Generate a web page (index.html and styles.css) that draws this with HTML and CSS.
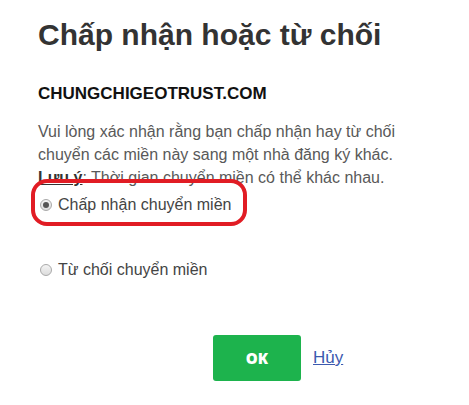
FILE: index.html
```html
<!DOCTYPE html>
<html>
	<head>
		<meta charset="UTF-8">
		<title>Chấp nhận hoặc từ chối</title>
		<link rel="stylesheet" href="styles.css">
	</head>
	<body>
		<div id="dialog">
			<h1 class="title">Chấp nhận hoặc từ chối</h1>
			<div class="domain">CHUNGCHIGEOTRUST.COM</div>
			<p class="desc">
				Vui lòng xác nhận rằng bạn chấp nhận hay từ chối<br>
				chuyển các miền này sang một nhà đăng ký khác.<br>
				<b class="note">Lưu ý</b>: Thời gian chuyển miền có thể khác nhau.
			</p>

			<!--các lựa chọn-->
			<label class="option option-accept">
				<input type="radio" name="choice" checked>
				<span>Chấp nhận chuyển miền</span>
				<i class="mark"></i>
			</label>
			<label class="option option-reject">
				<input type="radio" name="choice">
				<span>Từ chối chuyển miền</span>
			</label>

			<!--nút-->
			<div class="actions">
				<button class="btn-ok">OK</button>
				<a href="#" class="cancel">Hủy</a>
			</div>
		</div>
	</body>
</html>
```
FILE: styles.css
```css
*{
	padding: 0;
	margin: 0;
	box-sizing: border-box;
}
body{
	background-color: #fff;
	font-family: "Liberation Sans", Arial, sans-serif;
	color: #333;
}
#dialog{
	padding: 17px 0 0 38px;
	width: 469px;
}
.title{
	font-size: 30px;
	line-height: 36px;
	font-weight: bold;
	color: #333;
}
.domain{
	margin-top: 31px;
	font-size: 17px;
	font-weight: bold;
	color: #111;
	line-height: 20px;
}
.desc{
	margin-top: 16px;
	font-size: 16px;
	line-height: 23px;
	color: #595959;
	white-space: nowrap;
}
.desc .note{
	color: #333;
	text-decoration: underline;
}

.option{
	display: flex;
	align-items: center;
	gap: 6px;
	font-size: 16px;
	line-height: 20px;
	color: #444;
	position: relative;
	width: max-content;
	margin-left: 2px;
}
.option-accept{
	margin-top: 6px;
}
.option-reject{
	margin-top: 45px;
}
.option input{
	appearance: none;
	-webkit-appearance: none;
	width: 12px;
	height: 12px;
	border-radius: 50%;
	border: 1px solid #a9a9a9;
	background: linear-gradient(#f4f4f4, #dcdcdc);
	position: relative;
}
.option input:checked::after{
	content: "";
	position: absolute;
	left: 2px;
	top: 2px;
	width: 6px;
	height: 6px;
	border-radius: 50%;
	background-color: #555;
}
/* khung đỏ đánh dấu */
.option .mark{
	position: absolute;
	left: -9px;
	top: -16px;
	width: 216px;
	height: 47px;
	border: 4px solid #e11c24;
	border-radius: 16px;
}

.actions{
	display: flex;
	align-items: center;
	gap: 12px;
	margin-top: 55px;
	padding-left: 175px;
}
.btn-ok{
	width: 88px;
	height: 46px;
	border: none;
	border-radius: 3px;
	background-color: #1db34d;
	color: #fff;
	font-family: "Open Sans", "Liberation Sans", sans-serif;
	font-size: 15px;
	font-weight: 800;
}
.cancel{
	color: #3c5aaf;
	font-size: 17px;
	text-decoration: underline;
}
```
